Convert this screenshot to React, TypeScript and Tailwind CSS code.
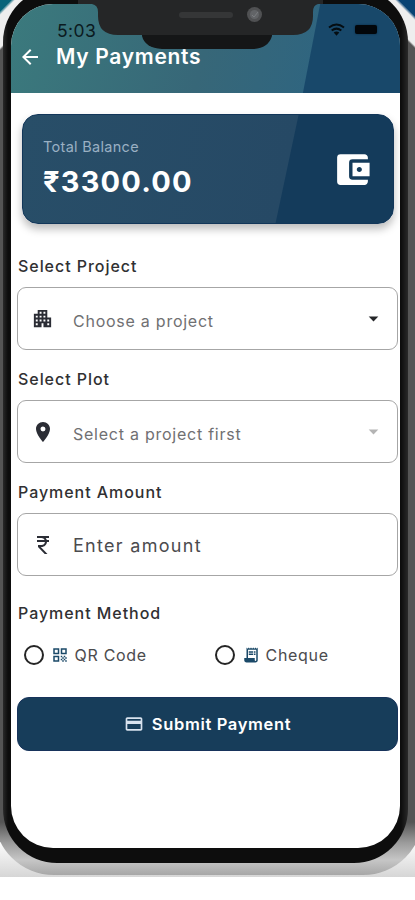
import React from "react";
import {
  MdAccountBalanceWallet,
  MdApartment,
  MdArrowBack,
  MdArrowDropDown,
  MdCurrencyRupee,
  MdLocationOn,
  MdPayment,
  MdQrCode,
  MdReceiptLong,
} from "react-icons/md";

function Notch() {
  return (
    <div className="absolute left-[78px] top-0 h-[50px] w-[245px]">
      <svg width="245" height="50" viewBox="0 0 245 50" aria-hidden="true">
        <path d="M64 30H194V36Q190 49 174 49H84Q67 48 64 36Z" fill="#151617" />
        <path d="M0 0H245V4H240Q235 5 235 12V16Q235 35 215 35H40Q20 35 20 16V12Q20 5 14 4H0Z" fill="#252627" />
        <rect x="101" y="12" width="54" height="6" rx="3" fill="#353637" />
        <circle cx="176.500" cy="14.500" r="7.500" fill="#505153" />
        <circle cx="176.500" cy="14.500" r="4.500" fill="#626467" />
        <path d="M174 15l2 2 4-5" fill="none" stroke="#7b7d80" strokeWidth="1" />
      </svg>
    </div>
  );
}

function Status() {
  return (
    <div className="flex h-[38px] items-end justify-between pl-[46px] pr-[23px] text-[#0b1a20]">
      <span className="text-[17.500px] leading-[23px] tracking-[0.400px]">5:03</span>
      <div className="flex items-center gap-[10px] pb-[6px]">
        <svg width="17" height="13" viewBox="0 0 17 13" fill="none" stroke="#050d12" strokeWidth="2">
          <path d="M1 4.500Q8.500-1.500 16 4.500M3.700 7.500Q8.500 3.700 13.300 7.500" />
          <path d="M5.700 9.500Q8.500 7.500 11.300 9.500L8.500 12.800Z" fill="#050d12" stroke="none" />
        </svg>
        <div className="h-[9px] w-[22px] rounded-[2px] bg-[#02060a] shadow-[0_0_2px_#08243a]" />
      </div>
    </div>
  );
}

function Label({ children }: { children: React.ReactNode }) {
  return <div className="ml-px h-[20px] text-[16px] font-medium leading-[20px] tracking-[0.950px] text-[#303032]">{children}</div>;
}

function Field({ icon, text, arrow, strong }: { icon: React.ReactNode; text: string; arrow?: string; strong?: boolean }) {
  return (
    <div className="mt-[11px] flex h-[63px] items-center rounded-[9px] border border-[#a6a6a6] pl-[13px] pr-[12px]">
      <div className="flex w-[42px] shrink-0 text-[#2b2d35]">{icon}</div>
      <span className={strong ? "mt-px text-[18px] tracking-[1.300px] text-[#4b4b4e]" : "mt-[5px] text-[16px] tracking-[0.750px] text-[#707072]"}>{text}</span>
      {arrow && <MdArrowDropDown size={23} color={arrow} className="ml-auto" />}
    </div>
  );
}

function Method({ icon, text }: { icon: React.ReactNode; text: string }) {
  return (
    <div className="flex w-[191px] shrink-0 items-center">
      <span className="size-[20px] rounded-full border-2 border-[#252525]" />
      <span className="ml-[7px] flex w-[23.500px] text-[#1b4968]">{icon}</span>
      <span className="text-[16px] tracking-[0.700px] text-[#4b4b4e]">{text}</span>
    </div>
  );
}

export default function App() {
  return (
    <div className="relative h-[900px] w-[415px] overflow-hidden bg-white font-[Inter,'Liberation_Sans',sans-serif]">
      <div className="h-[877px] bg-[linear-gradient(#075066_0px,#075066_12px,#fff_40px,#fff_840px,#d6d6d6_877px)]">
        <div className="-ml-[6px] h-[875px] w-[429px] rounded-b-[60px] bg-[linear-gradient(135deg,#07647a_0px,#07647a_12px,#eee_15px,#eee_38px,transparent_40px),linear-gradient(225deg,#084374_0px,#084374_17px,#eee_20px,#eee_38px,transparent_40px),linear-gradient(#bbb_0px,#bbb_30px,#555_34px,#555_822px,#999_842px,#c6c6c6_860px,#a7a7a7_875px)] pl-[9px]">
          <div className="h-[863px] w-[405px] overflow-hidden">
            <div className="-mt-[12px] h-[875px] rounded-[54px] bg-[linear-gradient(90deg,#292929_0px,#0d0d0d_5px,#0d0d0d_398px,#292929_405px)] px-[8px] pt-[16px]">
              <div className="relative h-[844px] w-[389px] overflow-hidden rounded-[42px] bg-white">
                <header className="h-[89px] bg-[linear-gradient(101deg,transparent_0px,transparent_303px,#18486a_304px),linear-gradient(105deg,#3b7a7d_0%,#376778_50%,#2f6580_80%)] text-white">
                  <Status />
                  <div className="flex h-[30px] items-center pl-[7px]">
                    <MdArrowBack size={24} />
                    <h1 className="ml-[14px] text-[21px] font-semibold tracking-[0.700px]">My Payments</h1>
                  </div>
                </header>
                <main className="pl-[6px] pr-[2px] pt-[23px]">
                  <section className="-mt-[2px] ml-[5px] flex h-[110px] w-[372px] items-center justify-between rounded-[16px] border border-[#123659] bg-[linear-gradient(102deg,#284e68_0px,#264965_269px,#143b5b_270px)] pl-[20px] pr-[20px] shadow-[0_5px_8px_#0004]">
                    <div>
                      <div className="text-[14.500px] leading-[18px] tracking-[0.300px] text-[#9ab0c3]">Total Balance</div>
                      <div className="mt-[7px] text-[29px] font-bold leading-[38px] tracking-[1.200px] text-white">₹3300.00</div>
                    </div>
                    <MdAccountBalanceWallet size={41} color="#fff" />
                  </section>
                  <div className="mt-[32px]">
                    <Label>Select Project</Label>
                    <Field icon={<MdApartment size={23} />} text="Choose a project" arrow="#252629" />
                  </div>
                  <div className="mt-[19px]">
                    <Label>Select Plot</Label>
                    <Field icon={<MdLocationOn size={24} />} text="Select a project first" arrow="#b4b4b4" />
                  </div>
                  <div className="mt-[19px]">
                    <Label>Payment Amount</Label>
                    <Field icon={<MdCurrencyRupee size={24} />} text="Enter amount" strong />
                  </div>
                  <div className="mt-[27px]">
                    <Label>Payment Method</Label>
                    <div className="mt-[20px] flex h-[24px] items-center pl-[7px]">
                      <Method icon={<MdQrCode size={18} />} text="QR Code" />
                      <Method icon={<MdReceiptLong size={18} />} text="Cheque" />
                    </div>
                  </div>
                  <button className="mt-[30px] flex h-[54px] w-full items-center justify-center gap-[8px] rounded-[12px] border border-[#17335b] bg-[#173d5a] text-[16.500px] font-semibold tracking-[0.650px] text-white">
                    <MdPayment size={20} color="#d8e2ee" />
                    <span>Submit Payment</span>
                  </button>
                </main>
              </div>
            </div>
          </div>
        </div>
      </div>
      <Notch />
    </div>
  );
}
